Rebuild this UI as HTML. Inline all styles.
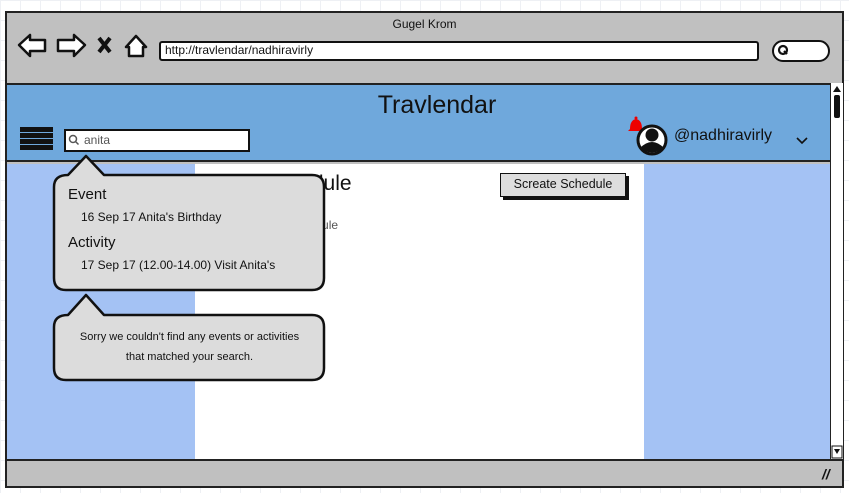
<!DOCTYPE html>
<html><head><meta charset="utf-8"><style>
*{margin:0;padding:0;box-sizing:border-box}
body{width:849px;height:493px;position:relative;overflow:hidden;font-family:"Liberation Sans",sans-serif;color:#111;
background-color:#fff;background-image:linear-gradient(#eef0f4 1px,transparent 1px),linear-gradient(90deg,#eef0f4 1px,transparent 1px);background-size:20px 20px}
.a{position:absolute}
</style></head><body>
<div class="a" style="left:5px;top:11px;width:839px;height:477px;border:2.5px solid #222;background:#c0c0c0"></div>
<div class="a" style="left:0;top:17px;width:849px;text-align:center;font-size:12px">Gugel Krom</div>
<svg class="a" style="left:15px;top:32px" width="140" height="28" viewBox="0 0 140 28">
<path d="M4 13 L15 3 L15 8 L30 8 L30 19 L15 19 L15 24 Z" fill="#fff" stroke="#111" stroke-width="2.5" stroke-linejoin="round"/>
<path d="M70 13 L59 3 L59 8 L43 8 L43 19 L59 19 L59 24 Z" fill="#fff" stroke="#111" stroke-width="2.5" stroke-linejoin="round"/>
<path d="M84 6 L95 20 M95 6 L84 20" stroke="#111" stroke-width="4"/>
<path d="M111 15 L121 4 L131 15 L128 15 L128 24 L114 24 L114 15 Z" fill="#fff" stroke="#111" stroke-width="2.5" stroke-linejoin="round"/>
</svg>
<div class="a" style="left:159px;top:41px;width:600px;height:20px;background:#fff;border:2.5px solid #111;border-radius:3px;font-size:12px;line-height:15px;padding-left:4px">http://travlendar/nadhiravirly</div>
<div class="a" style="left:772px;top:40px;width:58px;height:22px;background:#fff;border:2.5px solid #111;border-radius:12px"></div>
<svg class="a" style="left:777px;top:44px" width="14" height="14"><circle cx="6" cy="6" r="4" fill="none" stroke="#111" stroke-width="2.2"/><path d="M7 7 L10 10" stroke="#111" stroke-width="2.2"/></svg>
<div class="a" style="left:7px;top:83px;width:823px;height:79px;background:#6fa8dc;border-top:2px solid #222;border-bottom:2px solid #222"></div>
<div class="a" style="left:7px;top:91px;width:860px;text-align:center;font-size:25px">Travlendar</div>
<div class="a" style="left:20px;top:127px;width:33px;height:5px;background:#111;box-shadow:0 6px 0 #111,0 12px 0 #111,0 18px 0 #111"></div>
<div class="a" style="left:64px;top:129px;width:186px;height:23px;background:#fff;border:2px solid #111;font-size:12px;color:#555;line-height:19px;padding-left:18px">anita</div>
<svg class="a" style="left:68px;top:134px" width="12" height="12"><circle cx="5" cy="5" r="3.5" fill="none" stroke="#555" stroke-width="1.5"/><path d="M7.5 7.5 L10.5 10.5" stroke="#555" stroke-width="1.5"/></svg>
<svg class="a" style="left:627px;top:115px" width="45" height="42"><path d="M3 14 Q3 5 9 4 Q15 5 15 14 L17 16 L1 16 Z" fill="#e00"/><circle cx="9" cy="3" r="1.5" fill="#e00"/>
<circle cx="25" cy="25" r="14" fill="#fff" stroke="#111" stroke-width="3"/><circle cx="25" cy="20" r="6.5" fill="#111"/><path d="M13 33 Q25 21 37 33 Q25 42 13 33Z" fill="#111"/></svg>
<div class="a" style="left:674px;top:127px;font-size:16px">@nadhiravirly</div>
<svg class="a" style="left:795px;top:136px" width="14" height="10"><path d="M2 2 L7 7 L12 2" fill="none" stroke="#111" stroke-width="1.6"/></svg>
<div class="a" style="left:7px;top:164px;width:188px;height:296px;background:#a4c2f4"></div>
<div class="a" style="left:195px;top:164px;width:449px;height:296px;background:#fff"></div>
<div class="a" style="left:644px;top:164px;width:186px;height:296px;background:#a4c2f4"></div>
<div class="a" style="left:830px;top:83px;width:13px;height:377px;background:#fff;border-left:1.5px solid #222"></div>
<svg class="a" style="left:831px;top:84px" width="12" height="376"><path d="M2 8 L6 2 L10 8Z" fill="#111"/><rect x="3" y="11" width="6" height="23" rx="2" fill="#111"/><rect x="1" y="362" width="10" height="12" fill="none" stroke="#111"/><path d="M3 365 L9 365 L6 370Z" fill="#111"/></svg>
<div class="a" style="left:7px;top:459px;width:836px;height:2px;background:#222"></div>
<div class="a" style="left:822px;top:466px;font-size:14px;font-weight:bold;font-style:italic">//</div>
<div class="a" style="left:264px;top:172px;font-size:21px">Schedule</div>
<div class="a" style="left:288px;top:218px;font-size:12px;color:#555">Schedule</div>
<div class="a" style="left:500px;top:173px;width:126px;height:24px;background:#ddd;border:1.5px solid #111;box-shadow:3px 3px 0 #111;font-size:12.5px;text-align:center;line-height:21px">Screate Schedule</div>
<svg class="a" style="left:50px;top:150px" width="280" height="240">
<path d="M18 25 L36 6 L54 25 L262 25 Q274 25 274 37 L274 128 Q274 140 262 140 L16 140 Q4 140 4 128 L4 37 Q4 25 18 25Z" fill="#dcdcdc" stroke="#111" stroke-width="2.5" stroke-linejoin="round"/>
<path d="M18 165 L36 145 L54 165 L262 165 Q274 165 274 177 L274 218 Q274 230 262 230 L16 230 Q4 230 4 218 L4 177 Q4 165 18 165Z" fill="#dcdcdc" stroke="#111" stroke-width="2.5" stroke-linejoin="round"/>
</svg>
<div class="a" style="left:68px;top:186px;font-size:15px">Event</div>
<div class="a" style="left:81px;top:210px;font-size:12px">16 Sep 17 Anita's Birthday</div>
<div class="a" style="left:68px;top:234px;font-size:15px">Activity</div>
<div class="a" style="left:81px;top:258px;font-size:12px">17 Sep 17 (12.00-14.00) Visit Anita's</div>
<div class="a" style="left:54px;top:327px;width:271px;text-align:center;font-size:11px;line-height:20px">Sorry we couldn't find any events or activities<br>that matched your search.</div>
</body></html>
